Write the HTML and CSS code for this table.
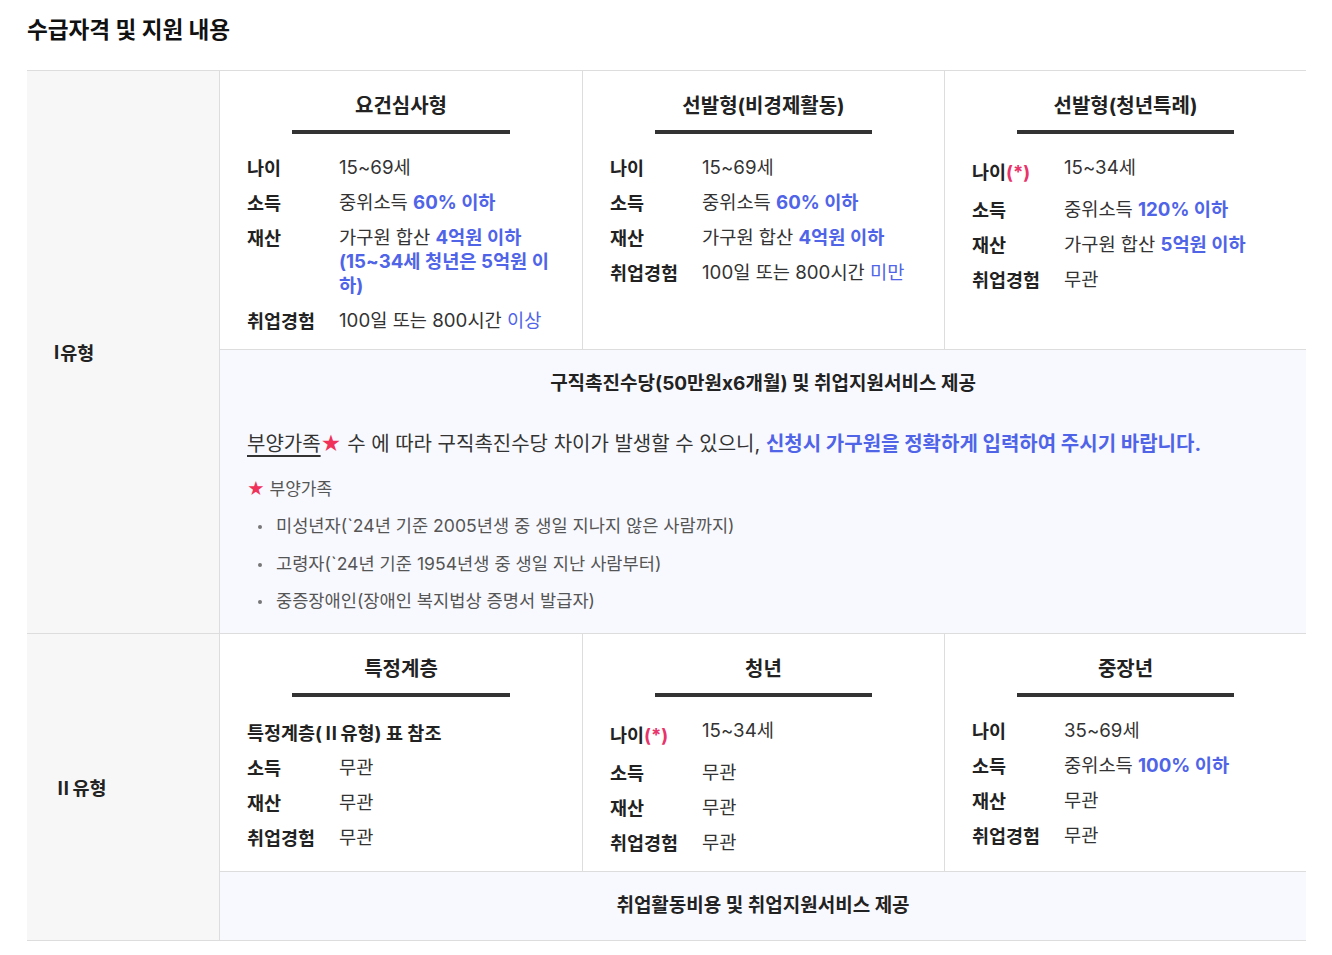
FILE: index.html
```html
<!DOCTYPE html>
<html lang="ko">
<head>
    <meta charset="UTF-8">
    <title>수급자격 및 지원 내용</title>
    <meta content="width=device-width, initial-scale=1" name="viewport">
    <link rel="stylesheet" href="styles.css">
</head>
<body>
<div class="page">
    <h2 class="page-title">수급자격 및 지원 내용</h2>
    <div class="qual">
        <div class="type-row">
            <div class="type-name"><span class="roman">Ⅰ</span>유형</div>
            <div class="type-body">
                <div class="tracks">
                    <div class="track">
                        <h3 class="track-title">요건심사형</h3>
                        <dl class="cond">
                            <div class="cond-row"><dt>나이</dt><dd>15~69세</dd></div>
                            <div class="cond-row"><dt>소득</dt><dd>중위소득 <b class="em">60% 이하</b></dd></div>
                            <div class="cond-row"><dt>재산</dt><dd>가구원 합산 <b class="em">4억원 이하</b> <b class="em">(15~34세 청년은 5억원 이하)</b></dd></div>
                            <div class="cond-row"><dt>취업경험</dt><dd>100일 또는 800시간 <span class="em">이상</span></dd></div>
                        </dl>
                    </div>
                    <div class="track">
                        <h3 class="track-title">선발형(비경제활동)</h3>
                        <dl class="cond">
                            <div class="cond-row"><dt>나이</dt><dd>15~69세</dd></div>
                            <div class="cond-row"><dt>소득</dt><dd>중위소득 <b class="em">60% 이하</b></dd></div>
                            <div class="cond-row"><dt>재산</dt><dd>가구원 합산 <b class="em">4억원 이하</b></dd></div>
                            <div class="cond-row"><dt>취업경험</dt><dd>100일 또는 800시간 <span class="em">미만</span></dd></div>
                        </dl>
                    </div>
                    <div class="track">
                        <h3 class="track-title">선발형(청년특례)</h3>
                        <dl class="cond">
                            <div class="cond-row tall"><dt>나이<span class="req">(*)</span></dt><dd>15~34세</dd></div>
                            <div class="cond-row"><dt>소득</dt><dd>중위소득 <b class="em">120% 이하</b></dd></div>
                            <div class="cond-row"><dt>재산</dt><dd>가구원 합산 <b class="em">5억원 이하</b></dd></div>
                            <div class="cond-row"><dt>취업경험</dt><dd>무관</dd></div>
                        </dl>
                    </div>
                </div>
                <div class="benefit">
                    <p class="benefit-title">구직촉진수당(50만원x6개월) 및 취업지원서비스 제공</p>
                    <p class="benefit-note"><u>부양가족</u><span class="star">★</span> 수 에 따라 구직촉진수당 차이가 발생할 수 있으니, <b class="em">신청시 가구원을 정확하게 입력하여 주시기 바랍니다.</b></p>
                    <p class="family-title"><span class="star">★</span> 부양가족</p>
                    <ul class="family-list">
                        <li>미성년자(`24년 기준 2005년생 중 생일 지나지 않은 사람까지)</li>
                        <li>고령자(`24년 기준 1954년생 중 생일 지난 사람부터)</li>
                        <li>중증장애인(장애인 복지법상 증명서 발급자)</li>
                    </ul>
                </div>
            </div>
        </div>
        <div class="type-row">
            <div class="type-name"><span class="roman wide">Ⅱ</span>유형</div>
            <div class="type-body">
                <div class="tracks">
                    <div class="track">
                        <h3 class="track-title">특정계층</h3>
                        <dl class="cond">
                            <div class="cond-row wide"><dt>특정계층(<span class="roman wide">Ⅱ</span>유형) 표 참조</dt></div>
                            <div class="cond-row"><dt>소득</dt><dd>무관</dd></div>
                            <div class="cond-row"><dt>재산</dt><dd>무관</dd></div>
                            <div class="cond-row"><dt>취업경험</dt><dd>무관</dd></div>
                        </dl>
                    </div>
                    <div class="track">
                        <h3 class="track-title">청년</h3>
                        <dl class="cond">
                            <div class="cond-row tall"><dt>나이<span class="req">(*)</span></dt><dd>15~34세</dd></div>
                            <div class="cond-row"><dt>소득</dt><dd>무관</dd></div>
                            <div class="cond-row"><dt>재산</dt><dd>무관</dd></div>
                            <div class="cond-row"><dt>취업경험</dt><dd>무관</dd></div>
                        </dl>
                    </div>
                    <div class="track">
                        <h3 class="track-title">중장년</h3>
                        <dl class="cond">
                            <div class="cond-row"><dt>나이</dt><dd>35~69세</dd></div>
                            <div class="cond-row"><dt>소득</dt><dd>중위소득 <b class="em">100% 이하</b></dd></div>
                            <div class="cond-row"><dt>재산</dt><dd>무관</dd></div>
                            <div class="cond-row"><dt>취업경험</dt><dd>무관</dd></div>
                        </dl>
                    </div>
                </div>
                <div class="benefit short">
                    <p class="benefit-title">취업활동비용 및 취업지원서비스 제공</p>
                </div>
            </div>
        </div>
    </div>
</div>
</body>
</html>
```

FILE: styles.css
```css
* {
    box-sizing: border-box;
}

body {
    margin: 0;
    font-family: Inter, "Noto Sans CJK KR", sans-serif;
    color: #333;
    background: #fff;
}

.page {
    padding: 15px 26px 0 27px;
}

.page-title {
    margin: 0;
    font-size: 22.6px;
    line-height: 30px;
    font-weight: bold;
    color: #111;
}

.qual {
    margin-top: 25px;
    border-top: 1px solid #ddd;
}

.type-row {
    display: grid;
    grid-template-columns: 193px 1fr;
    border-bottom: 1px solid #ddd;
}

.type-name {
    display: flex;
    align-items: center;
    padding-left: 27px;
    background-color: #f7f7f7;
    border-right: 1px solid #ddd;
    font-size: 18.5px;
    font-weight: bold;
    color: #222;
}

.roman {
    margin-right: 1px;
}

.roman.wide {
    font-family: "Noto Sans CJK KR", sans-serif;
    margin-right: 0;
}

.tracks {
    display: grid;
    grid-template-columns: repeat(3, 1fr);
}

.track + .track {
    border-left: 1px solid #ddd;
}

.track {
    padding-top: 22px;
}

.track-title {
    width: 60%;
    margin: 0 auto;
    padding-bottom: 11px;
    border-bottom: 4px solid #333;
    text-align: center;
    font-size: 20px;
    line-height: 26px;
    font-weight: bold;
    color: #222;
}

.cond {
    margin: 22px 0 0;
    padding: 0 27px 16px;
}

.cond-row {
    display: grid;
    grid-template-columns: 92px 1fr;
    line-height: 24px;
    margin-bottom: 11px;
}

.cond-row:last-child {
    margin-bottom: 0;
}

.cond-row.tall {
    margin-bottom: 14px;
}

.cond-row.tall dt {
    padding-top: 4px;
}

.cond-row.wide dt {
    grid-column: 1 / 3;
    padding-top: 1px;
}

.cond dt {
    font-size: 18.5px;
    font-weight: bold;
    color: #222;
}

.cond dd {
    margin: 0;
    font-size: 18.7px;
    color: #333;
}

.em {
    color: #5064e8;
}

.req {
    color: #e8336b;
    font-weight: bold;
}

.benefit {
    padding: 21px 27px 20px;
    background-color: #f8f9fe;
    border-top: 1px solid #ddd;
}

.benefit.short {
    padding: 21px 27px 22px;
}

.benefit p {
    margin: 0;
}

.benefit-title {
    text-align: center;
    font-size: 19px;
    line-height: 25px;
    font-weight: bold;
    color: #222;
}

.benefit-note {
    margin-top: 33px !important;
    font-size: 20px;
    line-height: 30px;
    color: #333;
}

.benefit-note u {
    text-underline-offset: 4px;
}

.star {
    color: #f0325a;
}

.family-title {
    margin-top: 18px !important;
    font-size: 17px;
    line-height: 24px;
    color: #555;
}

.family-list {
    list-style: none;
    margin: 13px 0 0;
    padding: 0;
}

.family-list li {
    position: relative;
    padding-left: 29px;
    font-size: 17.6px;
    line-height: 24px;
    color: #555;
}

.family-list li + li {
    margin-top: 13.5px;
}

.family-list li::before {
    content: "";
    position: absolute;
    left: 11px;
    top: 11px;
    width: 4px;
    height: 4px;
    border-radius: 50%;
    background-color: #777;
}
```
